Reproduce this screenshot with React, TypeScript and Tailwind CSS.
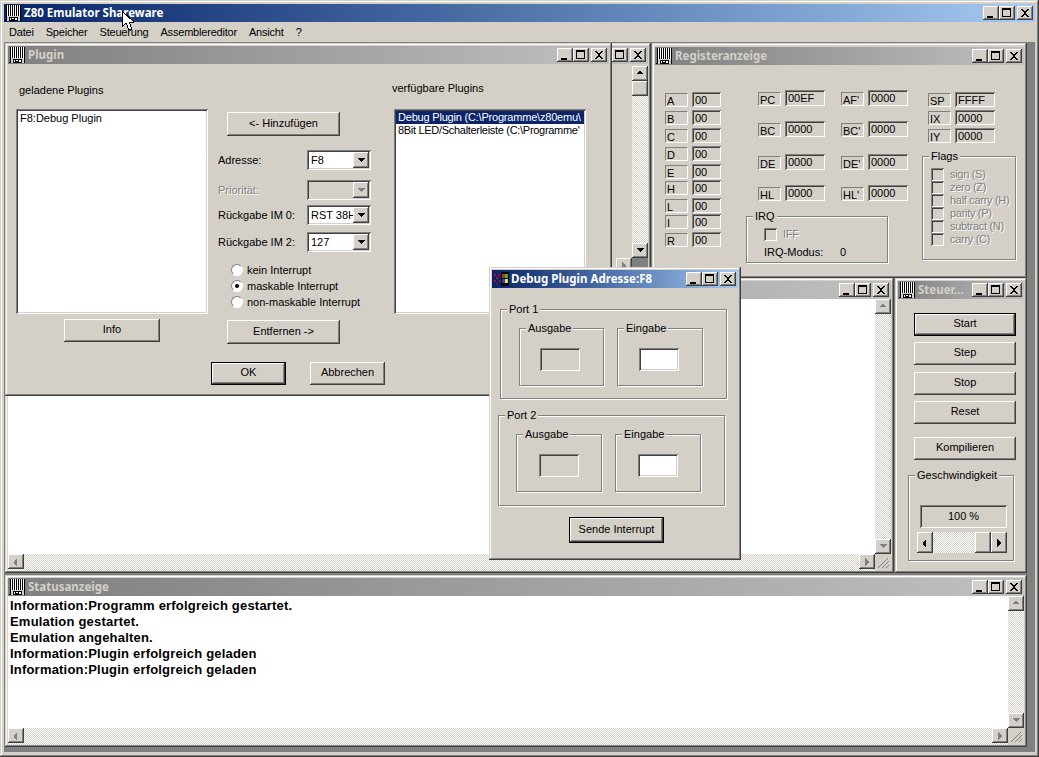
import type { ReactNode } from "react"

const raised =
  "bg-[#d4d0c8] shadow-[inset_-1px_-1px_0_#404040,inset_1px_1px_0_#fff,inset_-2px_-2px_0_#808080]"
const raisedDefault =
  "bg-[#d4d0c8] shadow-[inset_0_0_0_1px_#000,inset_-2px_-2px_0_#404040,inset_2px_2px_0_#fff,inset_-3px_-3px_0_#808080]"
const sunken =
  "shadow-[inset_1px_1px_0_#808080,inset_-1px_-1px_0_#fff,inset_2px_2px_0_#404040,inset_-2px_-2px_0_#d4d0c8]"
const frame =
  "bg-[#d4d0c8] shadow-[inset_-1px_-1px_0_#404040,inset_1px_1px_0_#d4d0c8,inset_-2px_-2px_0_#808080,inset_2px_2px_0_#fff]"
const checker = "bg-[repeating-conic-gradient(#d4d0c8_0_25%,#fff_0_50%)] bg-[length:2px_2px]"
const titleFont = "font-['Noto_Sans',sans-serif] font-bold text-[11.5px]"

function AppIcon() {
  return (
    <svg width="16" height="16" viewBox="0 0 16 16" shapeRendering="crispEdges" className="shrink-0">
      <path d="M1 0h14v11H1z" fill="#fff" />
      <path d="M1 0h1v15H1zM3 0h1v11H3zM5 0h1v11H5zM7 0h1v11H7zM9 0h1v11H9zM11 0h1v11h-1zM13 0h1v11h-1zM15 0h1v15h-1z" fill="#000" />
      <path d="M0 15h3v1H0zM13 15h3v1h-3z" fill="#000" />
      <path d="M2 11h13v5H2z" fill="#d4d0c8" />
      <path d="M4 12h9v4H4z" fill="#000" />
      <path d="M5 13h1v2H5zM7 13h2v1H7zM10 13h2v2h-2z" fill="#fff" />
    </svg>
  )
}

function DebugIcon() {
  return (
    <svg width="16" height="16" viewBox="0 0 16 16" shapeRendering="crispEdges" className="shrink-0 -mr-[1px]">
      <path d="M0 2h9v12H0z" fill="#0a246a" />
      <path d="M1 3h2v2H1zM5 3h2v2H5zM3 6h2v2H3zM1 9h2v2H1zM6 9h2v2H6zM3 12h2v1H3z" fill="#b01030" />
      <path d="M8 1h8v14H8z" fill="#000" />
      <path d="M9 3h3v4H9z" fill="#e02020" />
      <path d="M12 3h3v4h-3z" fill="#20c030" />
      <path d="M9 8h3v4H9z" fill="#2040e0" />
      <path d="M12 8h3v4h-3z" fill="#f0e020" />
    </svg>
  )
}

function CapButton({ kind }: { kind: "min" | "max" | "close" }) {
  return (
    <div className={`${raised} w-[16px] h-[14px] flex items-center justify-center shrink-0`}>
      <svg width="12" height="10" viewBox="0 0 12 10" shapeRendering="crispEdges">
        {kind === "min" && <path d="M2 8h6v2H2z" fill="#000" />}
        {kind === "max" && <path d="M1 0h9v2H1zM1 2h1v7H1zM9 2h1v7H9zM1 8h9v1H1z" fill="#000" />}
        {kind === "close" && (
          <path d="M2 1h2v1h1v1h2V2h1V1h2v1H9v1H8v1H7v2h1v1h1v1h1v1H8V8H7V7H5v1H4v1H2V8h1V7h1V6h1V4H4V3H3V2H2z" fill="#000" />
        )}
      </svg>
    </div>
  )
}

function CapButtons() {
  return (
    <div className="ml-auto flex items-center">
      <CapButton kind="min" />
      <CapButton kind="max" />
      <div className="w-[2px]" />
      <CapButton kind="close" />
    </div>
  )
}

function TitleBar({ title, active, icon }: { title?: string; active?: boolean; icon?: ReactNode }) {
  return (
    <div
      className={`h-[18px] shrink-0 flex items-center pr-[2px] ${titleFont} ${
        active
          ? "bg-gradient-to-r from-[#0a246a] to-[#a6caf0] text-white"
          : "bg-gradient-to-r from-[#808080] to-[#c0c0c0] text-[#d4d0c8]"
      }`}
    >
      <div className="ml-[1px] mr-[3px]">{icon ?? <AppIcon />}</div>
      {title && <span className="whitespace-nowrap">{title}</span>}
      <CapButtons />
    </div>
  )
}

function Win({
  title,
  active,
  icon,
  className,
  children,
}: {
  title?: string
  active?: boolean
  icon?: ReactNode
  className: string
  children: ReactNode
}) {
  return (
    <div className={`absolute ${frame} pt-[3px] px-[3px] pb-[2px] flex flex-col ${className}`}>
      <TitleBar title={title} active={active} icon={icon} />
      <div className="flex-1 min-h-0 relative">{children}</div>
    </div>
  )
}

function Btn({ children, isDefault, className = "" }: { children: ReactNode; isDefault?: boolean; className?: string }) {
  return (
    <div className={`${isDefault ? raisedDefault : raised} flex items-center justify-center shrink-0 pb-[2px] ${className}`}>
      {children}
    </div>
  )
}

function Group({ label, className, children }: { label: string; className: string; children?: ReactNode }) {
  return (
    <div className={`relative border border-[#808080] shadow-[1px_1px_0_#fff,inset_1px_1px_0_#fff] shrink-0 ${className}`}>
      <span className="absolute -top-[8px] left-[6px] px-[2px] bg-[#d4d0c8] leading-[14px] whitespace-nowrap">{label}</span>
      {children}
    </div>
  )
}

function Arrow({ dir, gray }: { dir: "up" | "down" | "left" | "right"; gray?: boolean }) {
  const d = {
    up: "M4 1h1v1h1v1h1v1H1V3h1V2h1V1z",
    down: "M1 1h7v1H7v1H6v1H5v1H4V4H3V3H2V2H1z",
    left: "M5 0v8H4V7H3V6H2V3h1V2h1V1h1z",
    right: "M2 0h1v1h1v1h1v1h1v2H5v1H4v1H3v1H2z",
  }[dir]
  return (
    <svg width="9" height="8" viewBox="0 0 9 8" shapeRendering="crispEdges">
      <path d={d} fill={gray ? "#808080" : "#000"} />
    </svg>
  )
}

function ScrollBtn({ dir, gray, className = "" }: { dir: "up" | "down" | "left" | "right"; gray?: boolean; className?: string }) {
  return (
    <div className={`${raised} w-[16px] h-[15px] flex items-center justify-center shrink-0 ${className}`}>
      <Arrow dir={dir} gray={gray} />
    </div>
  )
}

function Grip() {
  return (
    <svg width="16" height="16" viewBox="0 0 16 16" shapeRendering="crispEdges" className="absolute right-0 bottom-0">
      <path d="M12 3h1v1h-1zM11 4h1v1h-1zM10 5h1v1h-1zM9 6h1v1H9zM8 7h1v1H8zM7 8h1v1H7zM6 9h1v1H6zM5 10h1v1H5zM4 11h1v1H4zM3 12h1v1H3z" fill="#808080" />
      <path d="M13 6h1v1h-1zM12 7h1v1h-1zM11 8h1v1h-1zM10 9h1v1h-1zM9 10h1v1H9zM8 11h1v1H8zM7 12h1v1H7z" fill="#808080" />
      <path d="M13 10h1v1h-1zM12 11h1v1h-1zM11 12h1v1h-1z" fill="#808080" />
    </svg>
  )
}

function DocPane({ children }: { children?: ReactNode }) {
  return (
    <div className="h-full grid grid-cols-[1fr_16px] grid-rows-[1fr_17px]">
      <div className="bg-white overflow-hidden min-h-0">{children}</div>
      <div className={`flex flex-col justify-between ${checker}`}>
        <ScrollBtn dir="up" gray />
        <ScrollBtn dir="down" gray />
      </div>
      <div className={`flex justify-between ${checker}`}>
        <ScrollBtn dir="left" gray />
        <ScrollBtn dir="right" gray />
      </div>
      <div className="relative bg-[#d4d0c8]">
        <Grip />
      </div>
    </div>
  )
}

function Combo({ value, disabled }: { value?: string; disabled?: boolean }) {
  return (
    <div className={`${sunken} w-[64px] h-[20px] p-[2px] flex shrink-0 ${disabled ? "bg-[#d4d0c8]" : "bg-white"}`}>
      <span className="flex-1 overflow-hidden whitespace-nowrap pl-[2px] leading-[16px]">{value}</span>
      <div className={`${raised} w-[16px] flex items-center justify-center shrink-0`}>
        <svg width="7" height="4" viewBox="0 0 7 4" shapeRendering="crispEdges">
          <path d="M0 0h7v1H6v1H5v1H4v1H3V3H2V2H1V1H0z" fill={disabled ? "#808080" : "#000"} />
        </svg>
      </div>
    </div>
  )
}

function Radio({ label, checked }: { label: string; checked?: boolean }) {
  return (
    <div className="h-[16px] flex items-center">
      <div className="w-[12px] h-[12px] rounded-full bg-white border border-t-[#808080] border-l-[#808080] border-r-white border-b-white flex items-center justify-center shrink-0">
        {checked && <div className="w-[4px] h-[4px] rounded-full bg-black" />}
      </div>
      <span className="ml-[4px] whitespace-nowrap">{label}</span>
    </div>
  )
}

function Reg({ label, value, w, h, gap = "" }: { label: string; value: string; w: string; h: string; gap?: string }) {
  return (
    <div className={`flex items-end gap-[4px] ${gap}`}>
      <div className="w-[23px] h-[14px] border border-t-[#808080] border-l-[#808080] border-r-white border-b-white leading-[14px] pl-[1px] overflow-hidden">
        {label}
      </div>
      <div className={`${sunken} ${w} ${h} pl-[3px] leading-[17px]`}>{value}</div>
    </div>
  )
}

function Check({ label }: { label: string }) {
  return (
    <div className="h-[13px] flex items-center text-[#808080]">
      <div className={`${sunken} w-[13px] h-[13px] shrink-0`} />
      <span className="ml-[6px] whitespace-nowrap tracking-[-0.3px] [text-shadow:1px_1px_0_#fff]">{label}</span>
    </div>
  )
}

function PluginBody() {
  return (
    <div className="bg-[#d4d0c8] h-full">
      <div className="flex">
        <div className="ml-[8px] w-[192px]">
          <div className="pt-[19px] pl-[3px] leading-[14px]">geladene Plugins</div>
          <div className={`${sunken} bg-white mt-[12px] h-[205px] pl-[4px] pt-[2px] leading-[14px]`}>F8:Debug Plugin</div>
          <Btn className="ml-[48px] mt-[5px] w-[96px] h-[23px]">Info</Btn>
        </div>
        <div className="ml-[10px] w-[153px] pt-[48px]">
          <Btn className="ml-[9px] w-[113px] h-[24px]">&lt;- Hinzufügen</Btn>
          <div className="mt-[14px] flex items-center justify-between">
            <span>Adresse:</span>
            <Combo value="F8" />
          </div>
          <div className="mt-[10px] flex items-center justify-between">
            <span className="text-[#808080] [text-shadow:1px_1px_0_#fff]">Priorität:</span>
            <Combo disabled />
          </div>
          <div className="mt-[5px] flex items-center justify-between">
            <span>Rückgabe IM 0:</span>
            <Combo value="RST 38H" />
          </div>
          <div className="mt-[7px] flex items-center justify-between">
            <span>Rückgabe IM 2:</span>
            <Combo value="127" />
          </div>
          <div className="mt-[10px] ml-[13px]">
            <Radio label="kein Interrupt" />
            <Radio label="maskable Interrupt" checked />
            <Radio label="non-maskable Interrupt" />
          </div>
          <Btn className="ml-[9px] mt-[10px] w-[113px] h-[24px]">Entfernen -&gt;</Btn>
        </div>
        <div className="ml-[21px] w-[194px]">
          <div className="pt-[17px] leading-[14px]">verfügbare Plugins</div>
          <div className={`${sunken} bg-white ml-[2px] mt-[14px] w-[192px] h-[205px] p-[2px] leading-[13px] whitespace-nowrap overflow-hidden tracking-[-0.2px]`}>
            <div className="bg-[#0a246a] text-white pl-[2px] overflow-hidden">Debug Plugin (C:\Programme\z80emu\</div>
            <div className="pl-[2px] overflow-hidden tracking-[-0.3px]">8Bit LED/Schalterleiste (C:\Programme'</div>
          </div>
        </div>
      </div>
      <div className="flex mt-[18px] ml-[203px] gap-[24px]">
        <Btn isDefault className="w-[75px] h-[23px]">OK</Btn>
        <Btn className="w-[75px] h-[23px]">Abbrechen</Btn>
      </div>
    </div>
  )
}

const regsA = [
  ["A", "00", ""],
  ["B", "00", "mt-[3px]"],
  ["C", "00", "mt-[3px]"],
  ["D", "00", "mt-[3px]"],
  ["E", "00", "mt-[3px]"],
  ["H", "00", "mt-[1px]"],
  ["L", "00", "mt-[3px]"],
  ["I", "00", "mt-[1px]"],
  ["R", "00", "mt-[3px]"],
]

function RegisterBody() {
  const gaps = ["", "mt-[15px]", "mt-[17px]", "mt-[15px]"]
  const left = [["PC", "00EF"], ["BC", "0000"], ["DE", "0000"], ["HL", "0000"]]
  const right = [["AF'", "0000"], ["BC'", "0000"], ["DE'", "0000"], ["HL'", "0000"]]
  return (
    <div className="flex h-full bg-[#d4d0c8]">
      <div className="ml-[10px] pt-[27px]">
        {regsA.map((r) => (
          <Reg key={r[0]} label={r[0]} value={r[1]} gap={r[2]} w="w-[29px]" h="h-[15px]" />
        ))}
      </div>
      <div className="ml-[25px] w-[162px] pt-[25px]">
        <div className="flex pl-[12px] gap-[16px]">
          <div>
            {left.map((r, i) => (
              <Reg key={r[0]} label={r[0]} value={r[1]} gap={gaps[i]} w="w-[40px]" h="h-[16px]" />
            ))}
          </div>
          <div>
            {right.map((r, i) => (
              <Reg key={r[0]} label={r[0]} value={r[1]} gap={gaps[i]} w="w-[40px]" h="h-[16px]" />
            ))}
          </div>
        </div>
        <Group label="IRQ" className="mt-[15px] w-[142px] h-[47px]">
          <div className="pl-[17px] pt-[11px]">
            <Check label="IFF" />
            <div className="flex mt-[4px] leading-[14px]">
              <span className="w-[76px]">IRQ-Modus:</span>
              <span>0</span>
            </div>
          </div>
        </Group>
      </div>
      <div className="ml-[14px] w-[94px] pt-[27px]">
        <div className="pl-[6px]">
          <Reg label="SP" value="FFFF" w="w-[40px]" h="h-[15px]" />
          <Reg label="IX" value="0000" gap="mt-[3px]" w="w-[40px]" h="h-[15px]" />
          <Reg label="IY" value="0000" gap="mt-[3px]" w="w-[40px]" h="h-[15px]" />
        </div>
        <Group label="Flags" className="mt-[13px] w-[94px] h-[104px]">
          <div className="pl-[8px] pt-[11px] text-[#808080]">
            <Check label="sign (S)" />
            <Check label="zero (Z)" />
            <Check label="half carry (H)" />
            <Check label="parity (P)" />
            <Check label="subtract (N)" />
            <Check label="carry (C)" />
          </div>
        </Group>
      </div>
    </div>
  )
}

function SteuerBody() {
  return (
    <div className="h-full pl-[16px] pt-[14px] bg-[#d4d0c8]">
      <Btn isDefault className="w-[102px] h-[23px]">Start</Btn>
      <Btn className="mt-[6px] w-[102px] h-[23px]">Step</Btn>
      <Btn className="mt-[7px] w-[102px] h-[23px]">Stop</Btn>
      <Btn className="mt-[6px] w-[102px] h-[23px]">Reset</Btn>
      <Btn className="mt-[13px] w-[102px] h-[23px]">Kompilieren</Btn>
      <Group label="Geschwindigkeit" className="mt-[15px] -ml-[6px] w-[106px] h-[86px]">
        <div className="pt-[29px]">
          <div className={`${sunken} ml-[11px] w-[87px] h-[23px] flex items-center justify-center`}>100 %</div>
          <div className="mt-[4px] ml-[8px] w-[90px] h-[21px] flex">
            <ScrollBtn dir="left" className="!h-[21px]" />
            <div className={`flex-1 ${checker}`} />
            <div className={`${raised} w-[16px] h-[21px]`} />
            <ScrollBtn dir="right" className="!h-[21px]" />
          </div>
        </div>
      </Group>
    </div>
  )
}

function PortBox({ label, dark, className }: { label: string; dark?: boolean; className: string }) {
  return (
    <Group label={label} className={`h-[58px] pt-[19px] ${className}`}>
      <div className={`${sunken} w-[40px] h-[23px] ${dark ? "bg-white" : ""}`} />
    </Group>
  )
}

function DebugBody() {
  return (
    <div className="h-full bg-[#d4d0c8] pt-[21px]">
      <Group label="Port 1" className="ml-[8px] w-[227px] h-[90px]">
        <div className="flex pl-[18px] pt-[18px] gap-[13px]">
          <PortBox label="Ausgabe" className="w-[85px] pl-[20px]" />
          <PortBox label="Eingabe" dark className="w-[86px] pl-[21px]" />
        </div>
      </Group>
      <Group label="Port 2" className="ml-[6px] mt-[16px] w-[227px] h-[91px]">
        <div className="flex pl-[17px] pt-[18px] gap-[13px]">
          <PortBox label="Ausgabe" className="w-[86px] pl-[22px]" />
          <PortBox label="Eingabe" dark className="w-[86px] pl-[22px]" />
        </div>
      </Group>
      <Btn isDefault className="ml-[77px] mt-[11px] w-[95px] h-[26px]">Sende Interrupt</Btn>
    </div>
  )
}

const statusLines = [
  "Information:Programm erfolgreich gestartet.",
  "Emulation gestartet.",
  "Emulation angehalten.",
  "Information:Plugin erfolgreich geladen",
  "Information:Plugin erfolgreich geladen",
]

export default function App() {
  return (
    <div className={`${frame} relative w-[1039px] h-[757px] overflow-hidden p-[4px] flex flex-col text-[11px] text-black font-['Liberation_Sans',sans-serif]`}>
      <div className={`h-[18px] shrink-0 flex items-center pr-[2px] ${titleFont} text-white bg-gradient-to-r from-[#0a246a] to-[#a6caf0]`}>
        <div className="ml-[1px] mr-[3px]">
          <AppIcon />
        </div>
        <span>Z80 Emulator Shareware</span>
        <CapButtons />
      </div>
      <div className="h-[20px] shrink-0 flex items-center pl-[5px] gap-[12px] tracking-[-0.2px] [&>span]:whitespace-nowrap">
        <span>Datei</span>
        <span>Speicher</span>
        <span>Steuerung</span>
        <span>Assemblereditor</span>
        <span>Ansicht</span>
        <span>?</span>
      </div>
      <div className="relative flex-1 border-l border-t border-l-[#808080] border-t-[#808080] bg-[#808080] mb-[1px]">
        <Win className="left-0 top-[235px] w-[889px] h-[295px]">
          <DocPane />
        </Win>
        <Win className="left-0 top-0 w-[646px] h-[236px]">
          <div className="h-full flex flex-col items-end pt-[2px] bg-[#d4d0c8]">
            <div className={`w-[16px] h-[192px] flex flex-col justify-between ${checker}`}>
              <div>
                <ScrollBtn dir="up" />
                <div className={`${raised} w-[16px] h-[15px]`} />
              </div>
              <ScrollBtn dir="down" />
            </div>
            <div className="flex">
              <ScrollBtn dir="right" gray />
              <div className="w-[16px] h-[17px] bg-[#808080]" />
            </div>
          </div>
        </Win>
        <Win title="Registeranzeige" className="left-[647px] top-0 w-[375px] h-[235px] !pt-[4px]">
          <RegisterBody />
        </Win>
        <Win title="Steuer..." className="left-[890px] top-[235px] w-[132px] h-[295px]">
          <SteuerBody />
        </Win>
        <Win title="Statusanzeige" className="left-0 top-[532px] w-[1022px] h-[172px]">
          <DocPane>
            <div className="pt-[2px] pl-[2px] font-bold text-[13px] tracking-[0.2px] leading-[16px] whitespace-nowrap">
              {statusLines.map((l, i) => (
                <div key={i}>{l}</div>
              ))}
            </div>
          </DocPane>
        </Win>
        <Win title="Plugin" className="left-0 top-0 w-[607px] h-[353px]">
          <PluginBody />
        </Win>
        <Win
          title="Debug Plugin Adresse:F8"
          active
          icon={<DebugIcon />}
          className="left-[484px] top-[224px] w-[252px] h-[293px]"
        >
          <DebugBody />
        </Win>
      </div>
      <svg width="13" height="19" viewBox="0 0 13 19" className="absolute left-[121px] top-[11px]" shapeRendering="crispEdges">
        <path d="M1 0v16l4-4 3 7 3-1-3-7h5z" fill="#fff" stroke="#000" strokeWidth="1" />
      </svg>
    </div>
  )
}
